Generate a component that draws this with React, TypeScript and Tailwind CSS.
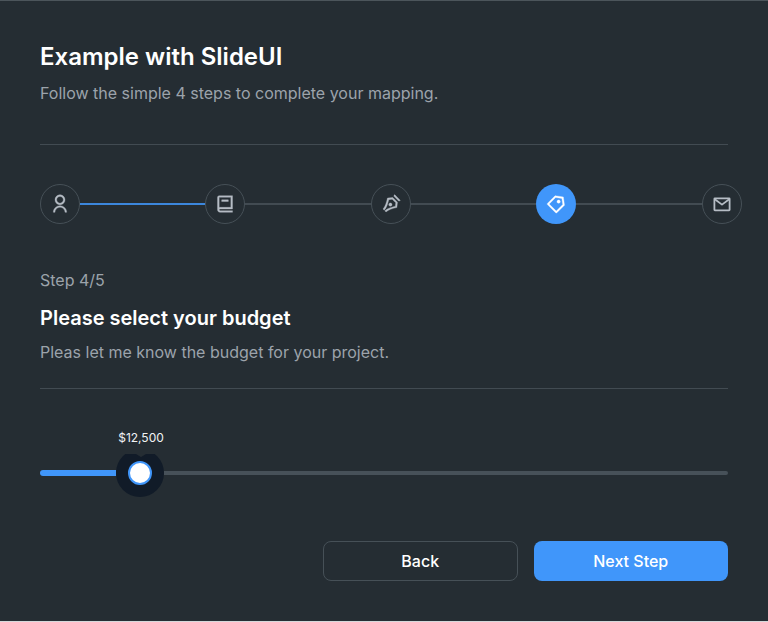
import { Fragment } from "react";
import { RiUserLine, RiBook2Line, RiPenNibLine, RiPriceTag3Line } from "react-icons/ri";

function MailIcon({ size }: { size: number; className?: string }) {
  return (
    <svg width={size} height={size} viewBox="0 0 20 20" fill="none" stroke="currentColor" strokeWidth="1.8" strokeLinejoin="round">
      <rect x="2.4" y="4.3" width="15.2" height="12" rx="0.5" />
      <path d="M2.8 5.2L10 10.6L17.2 5.2" />
    </svg>
  );
}

const steps = [
  { name: "Profile", Icon: RiUserLine },
  { name: "Catalog", Icon: RiBook2Line },
  { name: "Design", Icon: RiPenNibLine },
  { name: "Budget", Icon: RiPriceTag3Line },
  { name: "Contact", Icon: MailIcon },
];

function Stepper() {
  return (
    <ol className="mt-[39px] flex w-[701.6px] items-center">
      {steps.map(({ name, Icon }, i) => (
        <Fragment key={name}>
          {i > 0 && <li aria-hidden className={`h-0.5 flex-1 ${i === 1 ? "bg-[#3c87dd]" : "bg-[#424b52]"}`} />}
          <li
            aria-label={name}
            className={`flex size-10 shrink-0 items-center justify-center rounded-full ${
              i === 3 ? "bg-[#4096fa] text-white" : "border border-[#465057] text-[#b6bdc5]"
            }`}
          >
            <Icon size={20} className="[stroke-width:0.4]" />
          </li>
        </Fragment>
      ))}
    </ol>
  );
}

function BudgetSlider() {
  return (
    <div className="mt-[41px]">
      <div className="ml-[51px] w-[100px] text-center text-[12px] leading-4 text-[#f1f3f5]">$12,500</div>
      <div className="mt-[3px] flex h-12 items-center">
        <div className="h-1.5 w-[76px] rounded-l-full bg-[#4096fa]" />
        <div className="relative flex size-12 items-center justify-center rounded-full bg-[#111b28] [clip-path:inset(5px_0_0_0)]">
          <div className="absolute left-5 top-[5px] h-[3px] w-2.5 bg-[#252d33] [clip-path:polygon(0_0,100%_0,50%_100%)]" />
          <div className="size-6 rounded-full border-2 border-[#4096fa] bg-white" />
        </div>
        <div className="h-1 flex-1 rounded-r-full bg-[#475159]" />
      </div>
    </div>
  );
}

export default function App() {
  return (
    <div className="h-[622px] w-[768px] overflow-hidden bg-[#252d33] font-['Inter',sans-serif]">
      <main className="h-[621px] border-t border-[#4c555b] px-10 pt-10">
        <h1 className="text-[24px] font-semibold leading-8 text-white">Example with SlideUI</h1>
        <p className="mt-2 text-[16px] leading-6 text-[#9ca3ab]">Follow the simple 4 steps to complete your mapping.</p>
        <hr className="mt-[39px] border-[#424b52]" />
        <Stepper />
        <p className="mt-11 text-[16px] leading-6 text-[#9ca3ab]">Step 4/5</p>
        <h2 className="mt-3 text-[20px] font-semibold leading-7 text-white">Please select your budget</h2>
        <p className="mt-2 text-[16px] leading-6 text-[#9ca3ab]">Pleas let me know the budget for your project.</p>
        <hr className="mt-6 border-[#424b52]" />
        <BudgetSlider />
        <div className="mt-11 flex justify-end gap-4">
          <button className="h-10 w-[194.5px] rounded-lg border border-[#465057] text-[16px] font-medium text-white">Back</button>
          <button className="h-10 w-[194.5px] rounded-lg bg-[#4096fa] text-[16px] font-medium text-white">Next Step</button>
        </div>
      </main>
      <div className="h-px bg-[#d5d8da]" />
    </div>
  );
}
